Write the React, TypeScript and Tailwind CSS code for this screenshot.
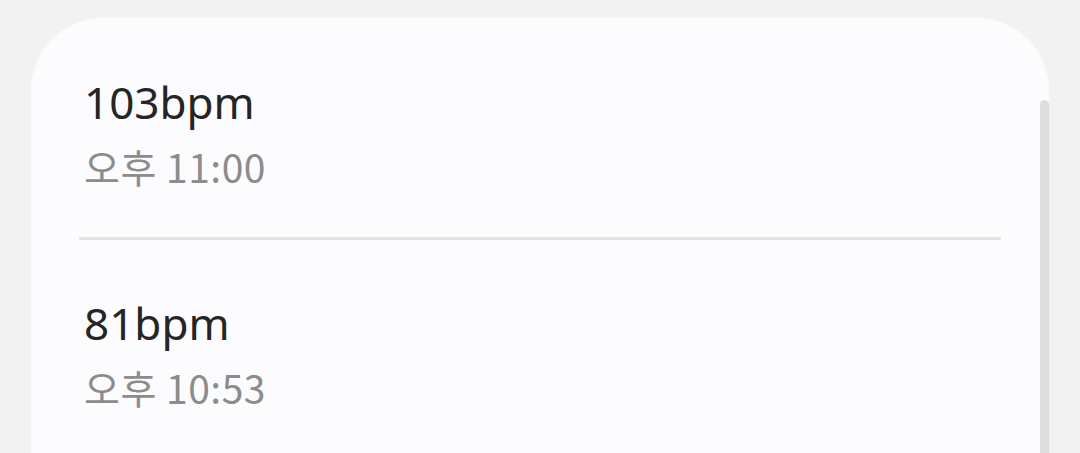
import React from "react";

const items = [
  { bpm: "103bpm", time: "오후 11:00" },
  { bpm: "81bpm", time: "오후 10:53" },
];

export default function App() {
  return (
    <div className="w-[1080px] h-[453px] overflow-hidden bg-[#f2f2f2] pt-[18px] pl-[31px]" style={{ fontFamily: '"Noto Sans", "Noto Sans CJK KR", sans-serif' }}>
      <div className="relative w-[1018px] h-[500px] bg-[#fcfcfe] rounded-t-[72px]">
        <div className="pt-[58px]">
          {items.map((it, i) => (
            <div key={i}>
              {i > 0 && <div className="mx-[48px] h-[3px] bg-[#e3e3e4]" />}
              <div className={i > 0 ? "pl-[53px] pt-[57px] pb-[49px]" : "pl-[53px] pb-[49px]"}>
                <div className="text-[44px] leading-[52px] text-[#252525]">{it.bpm}</div>
                <div className="text-[39px] leading-[44px] text-[#8c8c8c] mt-[16px] tracking-[0.5px]" style={{ fontFamily: '"Noto Sans CJK KR", sans-serif' }}>{it.time}</div>
              </div>
            </div>
          ))}
        </div>
        <div className="absolute right-0 top-[82px] w-[9px] h-[400px] rounded-full bg-[#dedee0]" />
      </div>
    </div>
  );
}
